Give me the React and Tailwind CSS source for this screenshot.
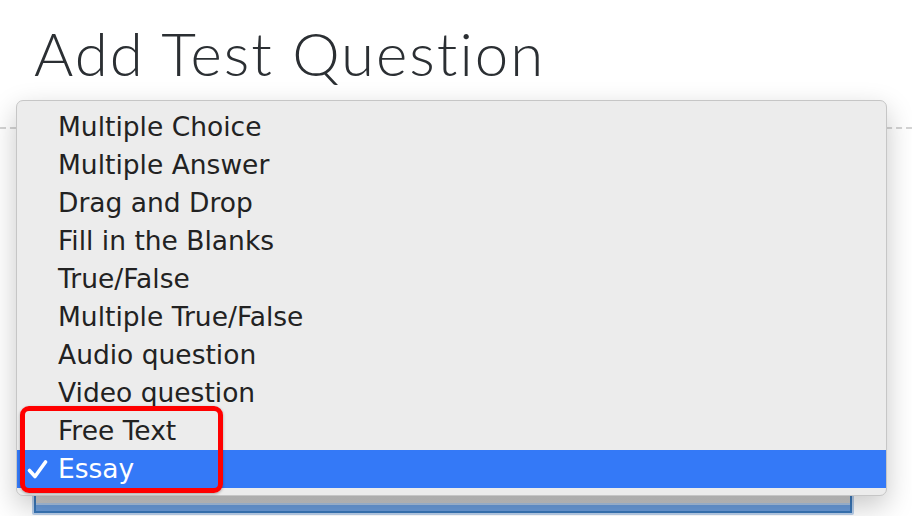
import React from 'react';

const options = [
  'Multiple Choice',
  'Multiple Answer',
  'Drag and Drop',
  'Fill in the Blanks',
  'True/False',
  'Multiple True/False',
  'Audio question',
  'Video question',
  'Free Text',
  'Essay',
];

function Check() {
  return (
    <svg width="21" height="19" viewBox="0 0 21 19" fill="none">
      <path d="M2.5 10.5 L8 16.5 L18.5 2" stroke="white" strokeWidth="3.6" strokeLinecap="round" strokeLinejoin="round" />
    </svg>
  );
}

export default function App() {
  const selected = 'Essay';

  return (
    <div className="relative w-[912px] h-[516px] overflow-hidden bg-white">
      <h1 className="pl-[34px] pt-[17px] text-[60px] leading-[72px] font-light text-[#2b2f33] tracking-[2px] [font-family:Lato,'Open_Sans',sans-serif]">
        Add Test Question
      </h1>

      <div className="mt-[38px] border-t-2 border-dashed border-[#d4d4d4]" />

      {/* the select that the list belongs to */}
      <div className="ml-[32px] mt-[344px] w-[822px] rounded-[2px] p-[2px] bg-[#b9cfea]">
        <div className="flex h-[38px] flex-col border-2 border-[#3a77b8] bg-[#e6e6e6]">
          <div className="flex-1 bg-gradient-to-b from-[#e4e4e4] to-[#c9c9c9]" />
          <div className="h-[2px] bg-[#a9c3e3]" />
          <div className="h-[6px] bg-[#6a9bd9]" />
        </div>
      </div>

      {/* open dropdown list */}
      <div className="absolute left-[16px] top-[100px] w-[871px] rounded-[7px] border border-[#c6c6c6] bg-[#ececec] py-[7px] shadow-[0_10px_28px_rgba(0,0,0,0.22)] [font-family:'DejaVu_Sans',Verdana,sans-serif]">
        {options.map((opt) => {
          const active = opt === selected;
          return (
            <div
              key={opt}
              className={`flex h-[38px] items-center text-[26.5px] ${active ? 'bg-[#3479f7] text-white' : 'text-[#222222]'}`}
            >
              <span className="flex w-[41px] shrink-0 justify-end pr-[10px] pt-[1px]">{active && <Check />}</span>
              {opt}
            </div>
          );
        })}
      </div>

      {/* annotation box */}
      <div className="absolute left-[20px] top-[406px] w-[203px] h-[87px] rounded-[9px] border-[5px] border-[#ff0000] shadow-[0_1px_3px_rgba(0,0,0,0.3)]" />
    </div>
  );
}
